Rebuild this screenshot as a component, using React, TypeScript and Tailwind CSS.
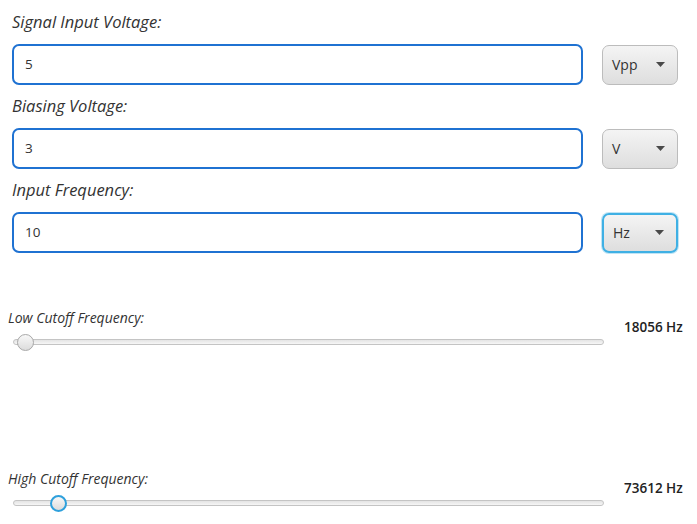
import React from "react";

function Field({ label, value, unit, focused }: { label: string; value: string; unit: string; focused?: boolean }) {
  return (
    <div className="flex flex-col">
      <div className="h-[24px] leading-[24px] pl-[12px] text-[16.5px] italic text-[#333333]">{label}</div>
      <div className="mt-[10px] flex items-center pl-[12px] pr-[19px]">
        <div className="flex h-[41px] flex-1 items-center rounded-[7px] border-2 border-[#1f72d2] bg-white pl-[11px] text-[13.5px] text-[#333333]">
          {value}
        </div>
        <div
          className={
            "ml-[19px] flex h-[40px] w-[76px] items-center justify-between rounded-[7px] bg-gradient-to-b from-[#f4f4f4] to-[#dedede] pl-[9px] pr-[12px] text-[14px] text-[#333333] " +
            (focused ? "border-2 border-[#3fb0e4] shadow-[0_0_0_1px_#bfe4f5]" : "border border-[#bcbcbc]")
          }
        >
          <span>{unit}</span>
          <svg width="9" height="5" viewBox="0 0 9 5">
            <path d="M0 0 L9 0 L4.5 5 Z" fill="#4a4a4a" />
          </svg>
        </div>
      </div>
    </div>
  );
}

function Slider({ label, value, pos, focused }: { label: string; value: string; pos: number; focused?: boolean }) {
  return (
    <div className="flex items-center">
      <div className="flex w-[604px] flex-col">
        <div className="h-[22px] leading-[22px] pl-[8px] text-[14px] italic text-[#333333]">{label}</div>
        <div className="relative ml-[13px] h-[26px]">
          <div className="absolute left-0 right-0 top-[10px] h-[6px] rounded-full border border-[#c4c4c4] bg-gradient-to-b from-[#e4e4e4] to-[#f6f6f6]" />
          <div
            className={
              "absolute top-[4.5px] h-[17px] w-[17px] rounded-full bg-gradient-to-b from-[#f8f8f8] to-[#dcdcdc] " +
              (focused ? "border-2 border-[#2ea0dc]" : "border border-[#a8a8a8]")
            }
            style={{ left: pos }}
          />
        </div>
      </div>
      <div className="ml-[20px] mt-[-8px] text-[13.5px] font-semibold text-[#222222]">{value}</div>
    </div>
  );
}

export default function App() {
  return (
    <div
      className="h-[524px] w-[697px] overflow-hidden bg-white"
      style={{ fontFamily: '"Open Sans", "Noto Sans", sans-serif' }}
    >
      <div className="flex flex-col gap-[9px] pt-[10px]">
        <Field label="Signal Input Voltage:" value="5" unit="Vpp" />
        <Field label="Biasing Voltage:" value="3" unit="V" />
        <Field label="Input Frequency:" value="10" unit="Hz" focused />
      </div>
      <div className="mt-[54px] flex flex-col gap-[113px]">
        <Slider label="Low Cutoff Frequency:" value="18056 Hz" pos={4} />
        <Slider label="High Cutoff Frequency:" value="73612 Hz" pos={37} focused />
      </div>
    </div>
  );
}
